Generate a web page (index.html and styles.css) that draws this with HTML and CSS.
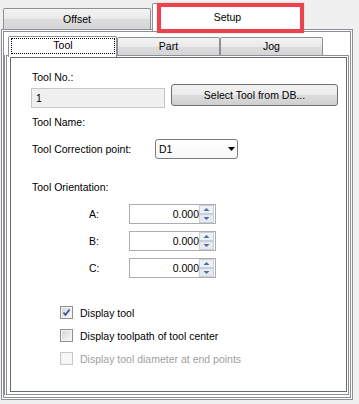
FILE: index.html
```html
<!doctype html>
<html>
<head lang='en'>
  <meta charset='utf-8'>
  <title>Setup</title>
  <link rel="stylesheet" href="styles.css">
</head>
<body>
<div class="window">
  <div class="tabstrip tabstrip--outer">
    <div class="tab tab--offset">Offset</div>
    <div class="tab tab--active tab--setup">Setup<span class="mark"></span></div>
  </div>

  <div class="outer-panel">
    <div class="tabstrip tabstrip--inner">
      <div class="tab tab--active tab--tool"><span class="focus">Tool</span></div>
      <div class="tab tab--part">Part</div>
      <div class="tab tab--jog">Jog</div>
    </div>

    <div class="inner-panel">
      <div class="content">
        <div class="label label--tool-no">Tool No.:</div>
        <div class="row row--tool-no">
          <div class="field field--disabled">1</div>
          <div class="button">Select Tool from DB...</div>
        </div>

        <div class="label label--name">Tool Name:</div>

        <div class="row row--correction">
          <span class="row__label">Tool Correction point:</span>
          <div class="select">
            <span>D1</span>
            <svg width="7" height="4" viewBox="0 0 7 4"><polygon points="0,0 7,0 3.5,4" fill="#000"/></svg>
          </div>
        </div>

        <div class="label label--orient">Tool Orientation:</div>

        <div class="axes">
          <div class="axis">
            <span class="axis__label">A:</span>
            <div class="spin">
              <span class="spin__value">0.000</span>
              <svg class="spin__buttons" width="15" height="18" viewBox="0 0 15 18">
                <rect x="0.5" y="0.5" width="14" height="8" fill="#eef0f4" stroke="#c9ced8"/>
                <rect x="0.5" y="9.5" width="14" height="8" fill="#e6e9ee" stroke="#c9ced8"/>
                <polygon points="4.5,6 10.5,6 7.5,3" fill="#4c6cae"/>
                <polygon points="4.5,12 10.5,12 7.5,15" fill="#4c6cae"/>
              </svg>
            </div>
          </div>
          <div class="axis">
            <span class="axis__label">B:</span>
            <div class="spin">
              <span class="spin__value">0.000</span>
              <svg class="spin__buttons" width="15" height="18" viewBox="0 0 15 18">
                <rect x="0.5" y="0.5" width="14" height="8" fill="#eef0f4" stroke="#c9ced8"/>
                <rect x="0.5" y="9.5" width="14" height="8" fill="#e6e9ee" stroke="#c9ced8"/>
                <polygon points="4.5,6 10.5,6 7.5,3" fill="#4c6cae"/>
                <polygon points="4.5,12 10.5,12 7.5,15" fill="#4c6cae"/>
              </svg>
            </div>
          </div>
          <div class="axis">
            <span class="axis__label">C:</span>
            <div class="spin">
              <span class="spin__value">0.000</span>
              <svg class="spin__buttons" width="15" height="18" viewBox="0 0 15 18">
                <rect x="0.5" y="0.5" width="14" height="8" fill="#eef0f4" stroke="#c9ced8"/>
                <rect x="0.5" y="9.5" width="14" height="8" fill="#e6e9ee" stroke="#c9ced8"/>
                <polygon points="4.5,6 10.5,6 7.5,3" fill="#4c6cae"/>
                <polygon points="4.5,12 10.5,12 7.5,15" fill="#4c6cae"/>
              </svg>
            </div>
          </div>
        </div>

        <div class="checks">
          <div class="check">
            <span class="check__box">
              <svg width="9" height="9" viewBox="0 0 9 9"><path d="M1.5 4.5 L3.5 7 L7.5 1.5" fill="none" stroke="#2f4f9e" stroke-width="1.6"/></svg>
            </span>
            <span class="check__text">Display tool</span>
          </div>
          <div class="check">
            <span class="check__box"></span>
            <span class="check__text">Display toolpath of tool center</span>
          </div>
          <div class="check check--disabled">
            <span class="check__box"></span>
            <span class="check__text">Display tool diameter at end points</span>
          </div>
        </div>
      </div>
    </div>
  </div>
</div>
</body>
</html>
```

FILE: styles.css
```css
html, body {
  margin: 0;
  padding: 0;
}

*, *:before, *:after {
  box-sizing: border-box;
}

body {
  background: #f0f0f0;
  font-family: 'Liberation Sans', Arial, sans-serif;
  font-size: 10.5px;
  line-height: 12px;
  color: #000;
}

.window {
  width: 359px;
  height: 404px;
}

/* tabs */

.tabstrip {
  display: flex;
  align-items: flex-end;
}

.tabstrip--outer {
  height: 29px;
  padding-left: 3px;
}

.tabstrip--inner {
  height: 23px;
  padding-left: 2px;
}

.tab {
  position: relative;
  border: 1px solid #8c8f96;
  border-bottom: 0;
  border-radius: 2px 2px 0 0;
  text-align: center;
  background: linear-gradient(#f4f4f4, #e9e9e9 50%, #dcdcdc 51%, #d6d6d6);
}

.tab--active {
  background: #fff;
  z-index: 1;
  margin-bottom: -2px;
}

.tab--offset {
  width: 148px;
  height: 21px;
  padding-top: 4px;
}

.tab--setup {
  width: 151px;
  height: 28px;
  margin-left: 1px;
  padding-top: 7px;
}

.mark {
  position: absolute;
  left: 4px;
  top: -1px;
  width: 147px;
  height: 30px;
  border: 4px solid #e9434f;
  box-shadow: 0 0 1px rgba(233, 67, 79, 0.6), inset 0 0 1px rgba(233, 67, 79, 0.6);
}

.tab--tool {
  width: 109px;
  height: 21px;
  padding: 1px 1px 0 2px;
}

.focus {
  display: block;
  height: 16px;
  border: 1px dotted #000;
}

.tab--part,
.tab--jog {
  width: 103px;
  height: 18px;
  padding-top: 2px;
}

/* panels */

.outer-panel {
  display: flex;
  flex-direction: column;
  width: 352px;
  height: 371px;
  margin-left: 1px;
  padding: 0 1px 2px 2px;
  border: 3px double #8c8f96;
  background: #fff;
}

.inner-panel {
  flex: 1;
  display: flex;
  flex-direction: column;
  padding: 1px 1px 2px 3px;
  border: 1px solid #8c8f96;
  box-shadow: -1px 0 0 #fff, -2px 0 0 #8c8f96;
}

.content {
  flex: 1;
  padding-left: 21px;
  border: 1px solid #6a6a6a;
}

.label--tool-no {
  margin-top: 13px;
}

.label--name {
  margin-top: 8px;
}

.label--orient {
  margin-top: 22px;
}

.row {
  display: flex;
}

.row--tool-no {
  align-items: flex-start;
  margin-top: 1px;
}

.field {
  width: 134px;
  height: 20px;
  margin: 4px 0 0 -1px;
  padding-left: 4px;
  border: 1px solid #c4c6c9;
  line-height: 18px;
}

.field--disabled {
  background: #f0f0f0;
}

.button {
  width: 167px;
  height: 22px;
  margin-left: 6px;
  border: 1px solid #707070;
  border-radius: 3px;
  text-align: center;
  line-height: 20px;
  background: linear-gradient(#f2f2f2, #ebebeb 48%, #dddddd 52%, #cfcfcf);
}

.row--correction {
  align-items: center;
  height: 20px;
  margin-top: 11px;
}

.row__label {
  width: 123px;
}

.select {
  display: flex;
  align-items: center;
  justify-content: space-between;
  width: 83px;
  height: 20px;
  padding: 0 2px 0 3px;
  border: 1px solid #7a7a7a;
  border-radius: 3px;
  background: linear-gradient(#ffffff, #f7f7f7);
}

/* axis inputs */

.axes {
  display: flex;
  flex-direction: column;
  gap: 7px;
  margin-top: 11px;
}

.axis {
  display: flex;
  align-items: center;
  height: 20px;
}

.axis__label {
  width: 40px;
  margin-left: 57px;
}

.spin {
  display: flex;
  align-items: center;
  width: 87px;
  height: 20px;
  padding-right: 1px;
  border: 1px solid #abadb3;
}

.spin__value {
  flex: 1;
  text-align: right;
}

.spin__buttons {
  display: block;
}

/* checkboxes */

.checks {
  display: flex;
  flex-direction: column;
  gap: 10px;
  margin-top: 28px;
}

.check {
  display: flex;
  align-items: center;
  height: 13px;
  margin-left: 28px;
}

.check__box {
  display: flex;
  align-items: center;
  justify-content: center;
  width: 13px;
  height: 13px;
  border: 1px solid #8e8f8f;
  background: linear-gradient(135deg, #d4d4d4, #fafafa);
  box-shadow: inset 0 0 0 1px #f4f4f4;
}

.check__text {
  margin-left: 7px;
}

.check--disabled .check__box {
  border-color: #c8c8c8;
  background: #f7f7f7;
}

.check--disabled .check__text {
  color: #a0a0a0;
}
```
